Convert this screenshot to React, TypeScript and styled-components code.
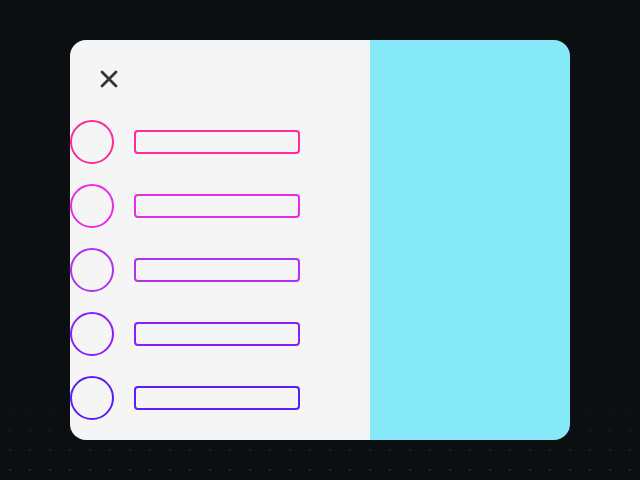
import styled, { createGlobalStyle } from 'styled-components';

const GlobalStyle= createGlobalStyle`
  html, body {
    margin : 0;
    padding: 0;
    height : 100%;
  }
  body {
    font-family: "Inter", "Liberation Sans", sans-serif;
    background-color: #0b0f12;
    background-image:
      linear-gradient(to bottom, #0b0f12 0, #0b0f12 76%, rgba(11,15,18,0.35) 100%),
      radial-gradient(circle at 10px 10px, #2c363c 1px, transparent 1.4px);
    background-size: 100% 100%, 20px 20px;
  }
  #root { height: 100%; }
`;

const Page= styled.div`
  height : 100%;
  width  : 100%;
  display: flex;
  align-items: center;
  justify-content: center;
`;

const Card= styled.div`
  width : 500px;
  height: 400px;
  display: grid;
  grid-template-columns: 300px 200px;
  border-radius: 16px;
  overflow: hidden;
`;

const Menu= styled.nav`
  background: #f5f5f5;
  padding   : 30px 0 0 0;
  display   : flex;
  flex-direction: column;
`;

const Preview= styled.div`
  background: #86e9f7;
`;

const CloseButton= styled.button`
  width : 18px;
  height: 18px;
  margin-left: 30px;
  padding: 0;
  border : none;
  background: transparent;
  display: flex;
  align-items: center;
  justify-content: center;
  color  : #333333;
  cursor : pointer;
`;

const Rows= styled.ul`
  list-style: none;
  margin : 32px 0 0 0;
  padding: 0;
  display: flex;
  flex-direction: column;
  row-gap: 20px;
`;

const Row= styled.li`
  height : 44px;
  display: flex;
  align-items: center;
  column-gap: 20px;
`;

const Avatar= styled.span<{ $color: string }>`
  width : 44px;
  height: 44px;
  box-sizing: border-box;
  border: 2px solid ${ p => p.$color };
  border-radius: 50%;
`;

const Label= styled.span<{ $color: string }>`
  width : 166px;
  height: 24px;
  box-sizing: border-box;
  border: 2px solid ${ p => p.$color };
  border-radius: 4px;
`;

const colors= ['#ff2b98', '#e82ae9', '#b22ff4', '#8b1ff5', '#5a1ff6'];

export default function App() {
  return (
    <>
      <GlobalStyle />
      <Page>
        <Card>
          <Menu>
            <CloseButton aria-label='close'>
              <svg width='18' height='18' viewBox='0 0 18 18' fill='none'>
                <path d='M2 2L16 16M16 2L2 16' stroke='currentColor' strokeWidth='2.8' strokeLinecap='round' />
              </svg>
            </CloseButton>
            <Rows>
              { colors.map(c => (
                <Row key={ c }>
                  <Avatar $color={ c } />
                  <Label $color={ c } />
                </Row>
              )) }
            </Rows>
          </Menu>
          <Preview />
        </Card>
      </Page>
    </>
  );
}
